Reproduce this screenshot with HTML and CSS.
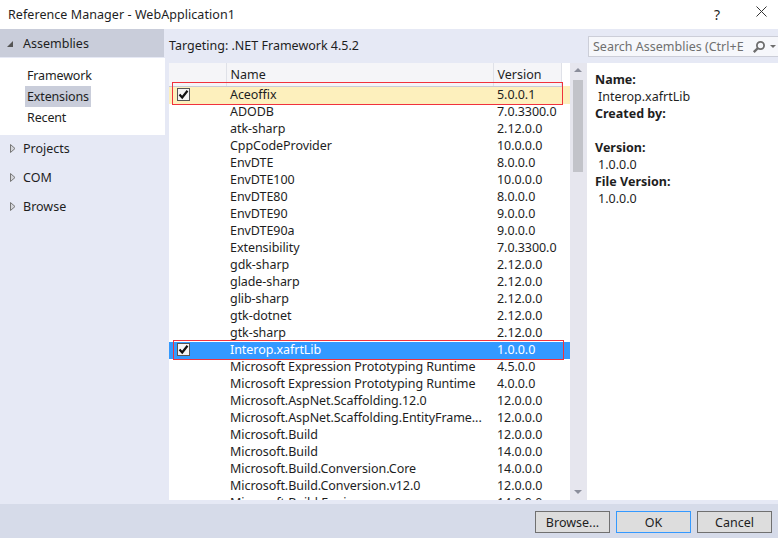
FILE: index.html
```html
<!DOCTYPE html>
<html lang="en">
<head>
    <meta charset="UTF-8">
    <title>Reference Manager - WebApplication1</title>
    <link rel="stylesheet" href="styles.css">
</head>
<body>
    <div class="dialog">
        <div class="titlebar">
            <span class="title">Reference Manager - WebApplication1</span>
            <span class="help">?</span>
            <svg class="close" width="11" height="11" viewBox="0 0 11 11"><path d="M0.5 0.5L10.5 10.5M10.5 0.5L0.5 10.5" stroke="#333" stroke-width="1" fill="none"/></svg>
        </div>

        <div class="body">
            <div class="sidebar">
                <div class="group group-open"><span class="arrow-open"></span>Assemblies</div>
                <div class="subitems">
                    <div class="subitem">Framework</div>
                    <div class="subitem subitem-active">Extensions</div>
                    <div class="subitem">Recent</div>
                </div>
                <div class="group"><svg class="arrow-closed" width="6" height="9" viewBox="0 0 6 9"><path d="M0.5 0.5L5 4.5L0.5 8.5Z" fill="#d5d6dc" stroke="#777"/></svg>Projects</div>
                <div class="group"><svg class="arrow-closed" width="6" height="9" viewBox="0 0 6 9"><path d="M0.5 0.5L5 4.5L0.5 8.5Z" fill="#d5d6dc" stroke="#777"/></svg>COM</div>
                <div class="group"><svg class="arrow-closed" width="6" height="9" viewBox="0 0 6 9"><path d="M0.5 0.5L5 4.5L0.5 8.5Z" fill="#d5d6dc" stroke="#777"/></svg>Browse</div>
            </div>

            <div class="center">
                <div class="toolbar">
                    <span class="targeting">Targeting: .NET Framework 4.5.2</span>
                    <div class="search">
                        <span class="search-text">Search Assemblies (Ctrl+E</span>
                        <svg width="14" height="14" viewBox="0 0 14 14"><circle cx="8.5" cy="5.5" r="3.6" fill="none" stroke="#6d6d6d" stroke-width="1.8"/><path d="M6 8L1.8 12.2" stroke="#6d6d6d" stroke-width="2.4"/></svg>
                        <span class="search-drop"></span>
                    </div>
                </div>
                <div class="content">
                    <div class="list">
                        <table>
                            <colgroup><col class="col-check"><col class="col-name"><col class="col-version"><col></colgroup>
                            <thead>
                                <tr><th></th><th>Name</th><th>Version</th><th></th></tr>
                            </thead>
                            <tbody>
                                <tr class="row-checked"><td><span class="check"><svg width="11" height="11" viewBox="0 0 11 11"><path d="M1.5 5.5L4.2 8.5L9.5 1.8" fill="none" stroke="#111" stroke-width="2.2"/></svg></span></td><td>Aceoffix</td><td>5.0.0.1</td><td></td></tr>
                                <tr><td></td><td>ADODB</td><td>7.0.3300.0</td><td></td></tr>
                                <tr><td></td><td>atk-sharp</td><td>2.12.0.0</td><td></td></tr>
                                <tr><td></td><td>CppCodeProvider</td><td>10.0.0.0</td><td></td></tr>
                                <tr><td></td><td>EnvDTE</td><td>8.0.0.0</td><td></td></tr>
                                <tr><td></td><td>EnvDTE100</td><td>10.0.0.0</td><td></td></tr>
                                <tr><td></td><td>EnvDTE80</td><td>8.0.0.0</td><td></td></tr>
                                <tr><td></td><td>EnvDTE90</td><td>9.0.0.0</td><td></td></tr>
                                <tr><td></td><td>EnvDTE90a</td><td>9.0.0.0</td><td></td></tr>
                                <tr><td></td><td>Extensibility</td><td>7.0.3300.0</td><td></td></tr>
                                <tr><td></td><td>gdk-sharp</td><td>2.12.0.0</td><td></td></tr>
                                <tr><td></td><td>glade-sharp</td><td>2.12.0.0</td><td></td></tr>
                                <tr><td></td><td>glib-sharp</td><td>2.12.0.0</td><td></td></tr>
                                <tr><td></td><td>gtk-dotnet</td><td>2.12.0.0</td><td></td></tr>
                                <tr><td></td><td>gtk-sharp</td><td>2.12.0.0</td><td></td></tr>
                                <tr class="row-selected"><td><span class="check"><svg width="11" height="11" viewBox="0 0 11 11"><path d="M1.5 5.5L4.2 8.5L9.5 1.8" fill="none" stroke="#111" stroke-width="2.2"/></svg></span></td><td>Interop.xafrtLib</td><td>1.0.0.0</td><td></td></tr>
                                <tr><td></td><td>Microsoft Expression Prototyping Runtime</td><td>4.5.0.0</td><td></td></tr>
                                <tr><td></td><td>Microsoft Expression Prototyping Runtime</td><td>4.0.0.0</td><td></td></tr>
                                <tr><td></td><td>Microsoft.AspNet.Scaffolding.12.0</td><td>12.0.0.0</td><td></td></tr>
                                <tr><td></td><td>Microsoft.AspNet.Scaffolding.EntityFrame...</td><td>12.0.0.0</td><td></td></tr>
                                <tr><td></td><td>Microsoft.Build</td><td>12.0.0.0</td><td></td></tr>
                                <tr><td></td><td>Microsoft.Build</td><td>14.0.0.0</td><td></td></tr>
                                <tr><td></td><td>Microsoft.Build.Conversion.Core</td><td>14.0.0.0</td><td></td></tr>
                                <tr><td></td><td>Microsoft.Build.Conversion.v12.0</td><td>12.0.0.0</td><td></td></tr>
                                <tr><td></td><td>Microsoft.Build.Engine</td><td>14.0.0.0</td><td></td></tr>
                            </tbody>
                        </table>
                        <div class="mark mark-first"></div>
                        <div class="mark mark-second"></div>
                    </div>
                    <div class="scrollbar">
                        <span class="scroll-up"></span>
                        <div class="thumb"></div>
                        <span class="scroll-down"></span>
                    </div>
                    <div class="details">
                        <div class="label">Name:</div>
                        <div class="value">Interop.xafrtLib</div>
                        <div class="label">Created by:</div>
                        <div class="value">&nbsp;</div>
                        <div class="label">Version:</div>
                        <div class="value">1.0.0.0</div>
                        <div class="label">File Version:</div>
                        <div class="value">1.0.0.0</div>
                    </div>
                </div>
            </div>
        </div>

        <div class="footer">
            <button class="btn">Browse...</button>
            <button class="btn btn-default">OK</button>
            <button class="btn">Cancel</button>
        </div>
    </div>
</body>
</html>
```

FILE: styles.css
```css
html, body {
    margin: 0;
    padding: 0;
}
body {
    font-family: "Noto Sans", "Noto Sans CJK SC", sans-serif;
    font-size: 12.5px;
    color: #1e1e1e;
    background: #fff;
}
.dialog {
    width: 778px;
    height: 538px;
    overflow: hidden;
    display: flex;
    flex-direction: column;
}

/* title bar */
.titlebar {
    height: 29px;
    display: flex;
    align-items: center;
    padding: 0 11px 1px 8px;
    box-sizing: border-box;
}
.title {
    flex: 1;
    letter-spacing: 0.06px;
}
.help {
    font-size: 14px;
    margin-right: 36px;
}
.close {
    margin-bottom: 5px;
}

/* main area */
.body {
    height: 475px;
    display: flex;
    background: #e6e9f5;
}
.sidebar {
    width: 165px;
    flex-shrink: 0;
}
.group {
    height: 29px;
    display: flex;
    align-items: center;
    padding-left: 23px;
    position: relative;
}
.group-open {
    height: 28px;
    width: 164px;
    box-sizing: border-box;
    background: #c9cdda;
    margin-bottom: 1px;
}
.arrow-open {
    position: absolute;
    left: 7px;
    top: 12px;
    width: 0;
    height: 0;
    border-left: 6px solid transparent;
    border-bottom: 6px solid #555;
}
.arrow-closed {
    position: absolute;
    left: 10px;
    top: 10px;
}
.subitems {
    background: #fff;
    height: 77px;
    box-sizing: border-box;
    padding-top: 7px;
    margin-bottom: -1px;
}
.subitem {
    height: 21px;
    line-height: 21px;
    margin-left: 25px;
    padding: 0 2px;
    width: fit-content;
    letter-spacing: -0.15px;
}
.subitem-active {
    background: #c9cdda;
}

.center {
    flex: 1;
    display: flex;
    flex-direction: column;
    min-width: 0;
}
.toolbar {
    height: 34px;
    display: flex;
    align-items: flex-start;
    padding-left: 4px;
}
.targeting {
    flex: 1;
    line-height: 34px;
}
.search {
    width: 190px;
    height: 21px;
    margin-top: 7px;
    box-sizing: border-box;
    border: 1px solid #ccced8;
    border-right: 0;
    background: #f6f7fb;
    display: flex;
    align-items: center;
    padding-left: 4px;
    gap: 7px;
}
.search-text {
    color: #6f6f6f;
    white-space: nowrap;
    width: 152px;
    overflow: hidden;
}
.search-drop {
    width: 0;
    height: 0;
    border-left: 3px solid transparent;
    border-right: 3px solid transparent;
    border-top: 3px solid #6d6d6d;
    margin-left: -3px;
}

.content {
    height: 437px;
    display: flex;
    padding-left: 4px;
}

/* assembly list */
.list {
    width: 401px;
    flex-shrink: 0;
    background: #fff;
    overflow: hidden;
    position: relative;
}
table {
    border-collapse: collapse;
    table-layout: fixed;
    width: 401px;
}
.col-check {
    width: 57px;
}
.col-name {
    width: 267px;
}
.col-version {
    width: 68px;
}
th {
    height: 23px;
    padding: 1px 0 0 4px;
    font-weight: normal;
    text-align: left;
    background: #f5f5f8;
    border-right: 1px solid #dfe1e8;
    border-bottom: 1px solid #c8cbd6;
    box-sizing: border-box;
}
th:last-child {
    border-right: 0;
    background: #fff;
    border-bottom: 0;
}
td {
    height: 17px;
    padding: 0 0 0 4px;
    line-height: 16px;
    vertical-align: top;
    white-space: nowrap;
    overflow: hidden;
    color: #1e1e1e;
    letter-spacing: -0.06px;
}
td:last-child {
    padding: 0;
}
.row-checked td {
    background: #fdf0bd;
}
.row-selected td {
    background: #3399ff;
    color: #fff;
}
.check {
    display: flex;
    align-items: center;
    justify-content: center;
    width: 13px;
    height: 13px;
    box-sizing: border-box;
    margin: 1px 0 0 4px;
    border: 1px solid #555;
    background: #f4f4f4;
}
.mark {
    position: absolute;
    border: 1px solid #f0323c;
    box-sizing: border-box;
}
.mark-first {
    left: 3px;
    top: 19px;
    width: 391px;
    height: 23px;
}
.mark-second {
    left: 4px;
    top: 277px;
    width: 391px;
    height: 20px;
}

/* scrollbar */
.scrollbar {
    width: 17px;
    flex-shrink: 0;
    background: #e6e6ee;
    position: relative;
}
.thumb {
    position: absolute;
    left: 3px;
    top: 17px;
    width: 10px;
    height: 92px;
    background: #c2c3c9;
}
.scroll-up, .scroll-down {
    position: absolute;
    left: 4px;
    width: 0;
    height: 0;
    border-left: 4px solid transparent;
    border-right: 4px solid transparent;
}
.scroll-up {
    top: 5px;
    border-bottom: 4px solid #8b8e9b;
}
.scroll-down {
    bottom: 6px;
    border-top: 4px solid #8b8e9b;
}

/* details pane */
.details {
    flex: 1;
    background: #fff;
    padding: 8px 0 0 8px;
    line-height: 17px;
}
.label {
    font-weight: bold;
}
.value {
    padding-left: 3px;
}

/* footer */
.footer {
    flex: 1;
    background: #d6dbe9;
    display: flex;
    justify-content: flex-end;
    align-items: flex-start;
    gap: 6px;
    padding: 7px 6px 0 0;
}
.btn {
    width: 75px;
    height: 22px;
    padding: 0;
    font-family: inherit;
    font-size: 12.5px;
    color: #1e1e1e;
    background: #dddddd;
    border: 1px solid #707070;
}
.btn-default {
    border-color: #3399ff;
}
```
